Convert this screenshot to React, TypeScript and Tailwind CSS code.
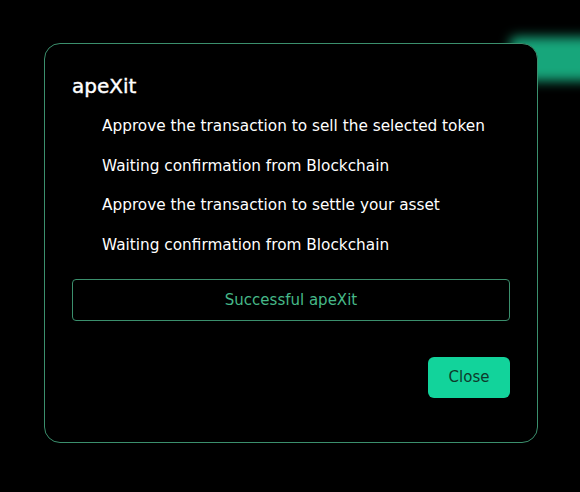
import React from 'react';

const steps: string[] = [
  'Approve the transaction to sell the selected token',
  'Waiting confirmation from Blockchain',
  'Approve the transaction to settle your asset',
  'Waiting confirmation from Blockchain',
];

const App: React.FC = () => {
  return (
    <div
      className="relative h-[492px] w-[580px] overflow-hidden bg-black"
      style={{ fontFamily: '"DejaVu Sans", "Liberation Sans", sans-serif' }}
    >
      {/* blurred page content behind the overlay */}
      <div className="absolute left-[510px] top-[37px] h-[44px] w-[90px] rounded-md bg-[#17a67b] blur-[6px]"></div>

      <div className="flex h-full items-start justify-center pl-[2px] pt-[43px]">
        <div className="relative flex h-[400px] w-[494px] flex-col rounded-[16px] border border-[#3b8f6d] bg-black px-[27px] pt-[27px]">
          <h2 className="text-[20px] font-normal leading-[30px] text-white [-webkit-text-stroke:0.4px_white]">apeXit</h2>

          <div className="mt-[5px] flex flex-col">
            {steps.map((step, i) => (
              <div key={i} className="flex h-[39.7px] items-center pl-[30px]">
                <span className="text-[15.3px] leading-[22px] text-white">{step}</span>
              </div>
            ))}
          </div>

          <div className="mt-[14px] flex h-[42px] items-center justify-center rounded-[4px] border border-[#3b8f6d]">
            <span className="text-[15px] text-[#46b888]">Successful apeXit</span>
          </div>

          <div className="mt-[36px] flex justify-end">
            <button className="h-[41px] w-[82px] rounded-[6px] bg-[#12d39b] text-[15px] text-[#0e3a2b]">
              Close
            </button>
          </div>
        </div>
      </div>
    </div>
  );
};

export default App;
